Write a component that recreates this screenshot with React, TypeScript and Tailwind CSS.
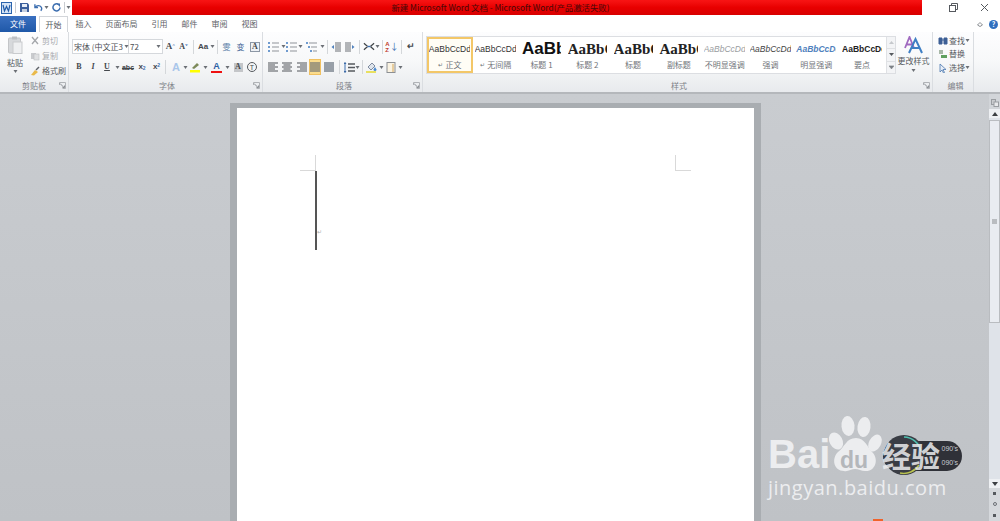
import React from "react";

const font = "font-['Noto_Sans_CJK_SC','Liberation_Sans',sans-serif]";

function Caret({ className = "w-[7px]" }: { className?: string }) {
  return (
    <span className={`flex shrink-0 justify-center ${className}`}>
      <svg width="5" height="3" viewBox="0 0 5 3"><path d="M0.5 0h4L2.5 3z" fill="#6b6f75" /></svg>
    </span>
  );
}
function Sep({ className = "mx-[3px]" }: { className?: string }) {
  return <span className={`h-[14px] w-px shrink-0 bg-[#d4d7da] ${className}`} />;
}
function Slot({ className = "w-[14px]", children }: { className?: string; children?: React.ReactNode }) {
  return <span className={`flex h-[16px] shrink-0 items-center justify-center ${className}`}>{children}</span>;
}
function Launcher() {
  return (
    <svg width="7" height="7" viewBox="0 0 7 7" className="shrink-0">
      <path d="M0.5 3V0.5H6.5V6.5H3.5" fill="none" stroke="#b0b3b7" strokeWidth="1" />
      <path d="M1 1.5L5 5.5M3.5 5.5H5.5V3.5" fill="none" stroke="#8a8e93" strokeWidth="1" />
    </svg>
  );
}
function Lines({ kind }: { kind: "bullet" | "num" | "multi" | "indentL" | "indentR" | "left" | "center" | "right" | "just" | "dist" }) {
  if (kind === "bullet" || kind === "num" || kind === "multi") {
    return (
      <svg width="11" height="10" viewBox="0 0 11 10">
        {[1, 5, 9].map((y, i) => (
          <g key={y}>
            <rect x={kind === "multi" ? i * 2 : 0} y={y - 1} width="2" height="2" fill="#6f9bcf" />
            <path d={`M${kind === "multi" ? 3 + i * 2 : 4} ${y}H11`} stroke="#8f9399" strokeWidth="1" />
          </g>
        ))}
      </svg>
    );
  }
  if (kind === "indentL" || kind === "indentR") {
    return (
      <svg width="10" height="10" viewBox="0 0 10 10">
        {[1, 3, 5, 7, 9].map((y) => (
          <path key={y} d={`M${kind === "indentL" ? 4 : 0} ${y}H${kind === "indentL" ? 10 : 6}`} stroke="#6a6e74" strokeWidth="1" />
        ))}
        <path d={kind === "indentL" ? "M3 3L0.5 5 3 7z" : "M7 3l2.500 2L7 7z"} fill="#4f81bd" />
      </svg>
    );
  }
  const ys = [1, 3, 5, 7, 9];
  return (
    <svg width="10" height="10" viewBox="0 0 10 10">
      {ys.map((y, i) => {
        const short = i % 2 === 1;
        let x1 = 0;
        let x2 = 10;
        if (short && kind === "left") x2 = 7;
        if (short && kind === "center") { x1 = 1.5; x2 = 8.5; }
        if (short && kind === "right") x1 = 3;
        return <path key={y} d={`M${x1} ${y}H${x2}`} stroke={kind === "dist" ? "#5a6672" : "#6a6e73"} strokeWidth="1.200" />;
      })}
    </svg>
  );
}

function Group({ className, label, launcher, children }: { className: string; label: string; launcher?: boolean; children: React.ReactNode }) {
  return (
    <div className={`flex h-full shrink-0 flex-col border-r border-[#dadde1] ${className}`}>
      <div className="min-h-0 flex-1">{children}</div>
      <div className="relative flex h-[14px] items-center justify-center pt-[2px] text-[8px] leading-none text-[#7d8187]">
        {label}
        {launcher && <span className="absolute right-[2px] top-[4px] flex"><Launcher /></span>}
      </div>
    </div>
  );
}

function StyleItem({ sample, label, sampleClass, selected, mark, boxClass = "w-[41px] justify-center" }: { sample: string; label: string; sampleClass: string; selected?: boolean; mark?: boolean; boxClass?: string }) {
  return (
    <div className={`flex h-[36px] w-[45.8px] shrink-0 flex-col items-center overflow-hidden ${selected ? "border-2 border-[#f3c768] bg-[#fffdf5]" : "border-2 border-transparent"}`}>
      <div className={`flex h-[20px] items-center overflow-hidden whitespace-nowrap ${boxClass}`}>
        <span className={sampleClass}>{sample}</span>
      </div>
      <div className="flex h-[12px] items-center whitespace-nowrap text-[8px] leading-none text-[#6f7378]">
        {mark && <span className="mr-[2px] text-[6px]">↵</span>}
        {label}
      </div>
    </div>
  );
}

function Tab({ label, className }: { label: string; className: string }) {
  return <div className={`flex h-[16px] shrink-0 items-center justify-center whitespace-nowrap text-[8px] leading-none text-[#5d6166] ${className}`}>{label}</div>;
}

const sampleFont = "font-['Liberation_Sans',sans-serif]";
const serif = "font-['Liberation_Serif',serif]";
const headBox = "w-[39px] justify-start";
const clipBox = "w-[40px] justify-start";

export default function App() {
  return (
    <div className={`relative flex h-[521px] w-[1000px] flex-col overflow-hidden bg-white ${font}`}>
      {/* title bar */}
      <div className="flex h-[16px] shrink-0 items-start bg-white">
        <div className="flex h-[15px] w-[72px] shrink-0 items-center pl-[1px]">
          <svg width="11" height="12" viewBox="0 0 11 12" className="shrink-0">
            <rect x="0.5" y="0.5" width="10" height="11" fill="#d6e4f5" stroke="#2b64ad" />
            <path d="M2 3l1.500 6L5.500 4.500 7.500 9 9 3" fill="none" stroke="#1f5aa8" strokeWidth="1.200" />
          </svg>
          <span className="mx-[3px] h-[11px] w-px bg-[#c9ccd0]" />
          <svg width="9" height="9" viewBox="0 0 9 9" className="ml-[1px] shrink-0">
            <path d="M0 0h7.500L9 1.500V9H0z" fill="#3c5f9c" />
            <rect x="2" y="1" width="5" height="3" fill="#e6edf7" />
            <rect x="2" y="6" width="5" height="3" fill="#c4cfdf" />
          </svg>
          <svg width="9" height="9" viewBox="0 0 10 9" className="ml-[5px] shrink-0">
            <path d="M1 1v3.500h3.500M1.500 4.200C3 2 6.500 1.800 8 4c.8 1.300.5 3-.5 4" fill="none" stroke="#3d6fb0" strokeWidth="1.500" />
          </svg>
          <Caret className="w-[7px]" />
          <svg width="9" height="9" viewBox="0 0 9 9" className="ml-[2px] shrink-0">
            <path d="M6.500 1.500A3.500 3.500 0 1 0 8 4.500" fill="none" stroke="#3d6fb0" strokeWidth="1.500" />
            <path d="M4.500 0.500h3.500V4z" fill="#3d6fb0" />
          </svg>
          <span className="ml-[3px] h-[11px] w-px bg-[#c9ccd0]" />
          <Caret className="w-[6px]" />
        </div>
        <div className="flex h-[15px] w-[850px] shrink-0 items-center justify-center whitespace-nowrap bg-gradient-to-b from-[#f81414] via-[#e80000] to-[#d80000] pl-[7px] text-[8.400px] leading-none text-[#480808]">
          新建 Microsoft Word 文档 - Microsoft Word(产品激活失败)
        </div>
        <div className="flex h-[15px] flex-1 items-center">
          <svg width="9" height="9" viewBox="0 0 9 9" className="ml-[27px] shrink-0">
            <rect x="0.500" y="2.500" width="6" height="6" fill="none" stroke="#55595e" />
            <path d="M2.500 2.500V0.500H8.500V6.500H6.500" fill="none" stroke="#55595e" />
          </svg>
          <svg width="9" height="9" viewBox="0 0 9 9" className="ml-[22px] shrink-0">
            <path d="M1 1L8 8M8 1L1 8" stroke="#55595e" strokeWidth="1" />
          </svg>
        </div>
      </div>

      {/* tabs */}
      <div className="flex h-[16px] shrink-0 items-center bg-white">
        <div className="flex h-[16px] w-[36px] shrink-0 items-center justify-center bg-gradient-to-b from-[#3a70c0] to-[#1f58a8] text-[8px] leading-none text-white">文件</div>
        <div className="ml-[3px] flex h-[16px] w-[29px] shrink-0 items-center justify-center border-x border-t border-[#d3d6da] bg-white text-[8px] leading-none text-[#55595e]">开始</div>
        <Tab label="插入" className="ml-[8px] w-[15px]" />
        <Tab label="页面布局" className="ml-[15px] w-[31px]" />
        <Tab label="引用" className="ml-[15px] w-[15px]" />
        <Tab label="邮件" className="ml-[15px] w-[15px]" />
        <Tab label="审阅" className="ml-[15px] w-[15px]" />
        <Tab label="视图" className="ml-[15px] w-[15px]" />
        <div className="ml-auto flex items-center pr-[1px]">
          <svg width="6" height="6" viewBox="0 0 6 6" className="mr-[6px]">
            <path d="M0.500 4L3 1.500 5.500 4 3 5.500z" fill="none" stroke="#8a8e93" />
          </svg>
          <span className="mr-[1px] flex h-[9px] w-[9px] items-center justify-center rounded-full bg-[#2f6fc0] text-[7px] font-bold leading-none text-white">?</span>
        </div>
      </div>

      {/* ribbon */}
      <div className="flex h-[62px] shrink-0 border-b-2 border-[#b4b7bb] bg-gradient-to-b from-[#fdfdfe] via-[#f7f8f9] to-[#e8eaed]">
        <Group className="w-[69px]" label="剪贴板" launcher>
          <div className="flex h-[46px]">
            <div className="flex w-[30px] shrink-0 flex-col items-center pt-[4px]">
              <svg width="15" height="18" viewBox="0 0 15 18">
                <rect x="0.500" y="2" width="12" height="15" rx="1" fill="#d7d9dc" stroke="#c3c5c8" />
                <rect x="4" y="0.500" width="5" height="3" fill="#bfc1c4" />
                <rect x="5" y="6" width="9" height="11.500" fill="#eeeff1" stroke="#c9cbce" />
              </svg>
              <span className="mt-[3px] text-[8px] leading-[12px] text-[#55595e]">粘贴</span>
              <Caret className="mt-[1px] w-[7px]" />
            </div>
            <div className="flex flex-col pt-[2px]">
              {[
                { t: "剪切", c: "text-[#a7aaae]", i: <path d="M2 1L8 8M8 1L2 8" stroke="#a4a7ab" strokeWidth="1.300" /> },
                { t: "复制", c: "text-[#a7aaae]", i: <><rect x="1" y="2" width="5" height="6" fill="#c9cbce" /><rect x="4" y="3" width="5" height="6" fill="#dfe0e2" stroke="#bcbec1" strokeWidth=".6" /></> },
                { t: "格式刷", c: "text-[#55595e]", i: <><path d="M1 9L5 4l3 2-4 3.500z" fill="#e9b949" /><path d="M6 4l3-3" stroke="#5f6368" strokeWidth="1.500" /></> },
              ].map((r) => (
                <div key={r.t} className="flex h-[15px] items-center whitespace-nowrap">
                  <svg width="10" height="10" viewBox="0 0 10 10" className="mr-[2px] shrink-0">{r.i}</svg>
                  <span className={`text-[8px] leading-none ${r.c}`}>{r.t}</span>
                </div>
              ))}
            </div>
          </div>
        </Group>

        <Group className="w-[194px] pl-[3px]" label="字体" launcher>
          <div className="flex h-[46px] flex-col pt-[7px]">
            <div className="flex h-[15px] items-center">
              <div className="flex h-[15px] w-[57px] shrink-0 items-center whitespace-nowrap border border-[#d5d8dc] bg-white pl-[1px] text-[8px] leading-none text-[#4a4e53]">
                宋体 (中文正3<Caret className="ml-[1px] w-[5px]" />
              </div>
              <div className="flex h-[15px] w-[34px] shrink-0 items-center justify-between border-y border-r border-[#d5d8dc] bg-white pl-[1px] text-[8px] leading-none text-[#4a4e53]">
                72<Caret className="w-[7px]" />
              </div>
              <Slot className="ml-[1px] w-[13px]"><span className={`text-[9px] font-bold leading-none text-[#44484d] ${serif}`}>A<sup className="text-[5px] text-[#3d6fb0]">^</sup></span></Slot>
              <Slot className="w-[13px]"><span className={`text-[8px] font-bold leading-none text-[#44484d] ${serif}`}>A<sup className="text-[5px] text-[#3d6fb0]">v</sup></span></Slot>
              <Sep className="mx-[3px]" />
              <Slot className="w-[12px]"><span className={`text-[8px] font-bold leading-none text-[#44484d] ${sampleFont}`}>Aa</span></Slot>
              <Caret className="w-[6px]" />
              <Sep className="mx-[2px]" />
              <Slot className="w-[13px]"><span className="text-[8px] leading-none text-[#5b7fa8]">雯</span></Slot>
              <Slot className="w-[15px]"><span className="text-[8px] leading-none text-[#3d5f95]">变</span></Slot>
              <Slot className="w-[14px]"><span className={`flex h-[10px] w-[10px] items-center justify-center border border-[#8c97a5] bg-[#eef1f5] text-[8px] font-bold leading-none text-[#44484d] ${serif}`}>A</span></Slot>
            </div>
            <div className="mt-[5px] flex h-[16px] items-center text-[8px] font-bold leading-none text-[#44484d]">
              <Slot><span className={serif}>B</span></Slot>
              <Slot><span className={`italic ${serif}`}>I</span></Slot>
              <Slot><span className={`underline ${serif}`}>U</span></Slot>
              <Caret />
              <Slot><span className={`text-[7px] line-through ${sampleFont}`}>abc</span></Slot>
              <Slot><span className={sampleFont}>x<sub className="text-[5px] text-[#3d6fb0]">2</sub></span></Slot>
              <Slot className="w-[15px]"><span className={sampleFont}>x<sup className="text-[5px] text-[#3d6fb0]">2</sup></span></Slot>
              <Sep className="ml-[1px] mr-[3px]" />
              <Slot><span className={`text-[11px] text-[#a9c6ea] ${sampleFont}`}>A</span></Slot>
              <Caret className="w-[5px]" />
              <Slot>
                <svg width="12" height="12" viewBox="0 0 12 12">
                  <path d="M3 7l5-5 2 2-5 4z" fill="#7d8a5a" />
                  <rect x="1" y="9" width="10" height="2.500" fill="#ffff00" />
                </svg>
              </Slot>
              <Caret />
              <Slot className="w-[15px]">
                <span className="flex flex-col items-center">
                  <span className={`text-[9px] leading-[9px] text-[#2d5fa5] ${sampleFont}`}>A</span>
                  <span className="h-[2px] w-[11px] bg-[#ee1111]" />
                </span>
              </Slot>
              <Caret />
              <Slot><span className={`flex h-[9px] w-[9px] items-center justify-center bg-[#c4c6c9] text-[8px] ${serif}`}>A</span></Slot>
              <Slot>
                <span className={`flex h-[10px] w-[10px] items-center justify-center rounded-full border border-[#55595e] text-[7px] font-normal leading-none ${sampleFont}`}>T</span>
              </Slot>
            </div>
          </div>
        </Group>

        <Group className="w-[160px] pl-[3px]" label="段落" launcher>
          <div className="flex h-[46px] flex-col pt-[7px]">
            <div className="flex h-[15px] items-center">
              <Slot><Lines kind="bullet" /></Slot>
              <Caret />
              <Slot className="ml-[-1px]"><Lines kind="num" /></Slot>
              <Caret />
              <Slot className="w-[15px]"><Lines kind="multi" /></Slot>
              <Caret />
              <Sep className="mx-[1px]" />
              <Slot><Lines kind="indentL" /></Slot>
              <Slot><Lines kind="indentR" /></Slot>
              <Sep className="mx-[2px]" />
              <Slot className="w-[13px]">
                <svg width="12" height="9" viewBox="0 0 13 9"><path d="M1 1l4 3.500M12 1L8 4.500M1 8l4-3.500M12 8L8 4.500" stroke="#3f4347" strokeWidth="1.300" /><path d="M5 4.500h3" stroke="#3d6fb0" strokeWidth="1.500" /></svg>
              </Slot>
              <Caret className="w-[5px]" />
              <Sep className="mx-[2px]" />
              <Slot className="w-[14px]"><span className={`text-[6px] font-bold leading-[6px] text-[#c0392b] ${sampleFont}`}>A<br />Z</span><span className="text-[9px] leading-none text-[#3d6fb0]">↓</span></Slot>
              <Sep className="mx-[2px]" />
              <Slot><span className={`text-[9px] font-bold leading-none text-[#44484d] ${sampleFont}`}>↵</span></Slot>
            </div>
            <div className="mt-[5px] flex h-[16px] items-center">
              <Slot><Lines kind="left" /></Slot>
              <Slot><Lines kind="center" /></Slot>
              <Slot className="w-[15px]"><Lines kind="right" /></Slot>
              <Slot className="h-[14px] border border-[#f0c060] bg-[#fbdc8c]"><span className="flex"><Lines kind="just" /></span></Slot>
              <Slot className="w-[15px]"><Lines kind="dist" /></Slot>
              <Sep className="mx-[3px]" />
              <Slot className="w-[12px]">
                <svg width="11" height="11" viewBox="0 0 11 11"><path d="M1 1v9M0 2l1-1.500L2 2M0 9l1 1.500L2 9" stroke="#3d6fb0" /><path d="M4 2h7M4 5.500h7M4 9h7" stroke="#55595e" strokeWidth="1.300" /></svg>
              </Slot>
              <Caret className="w-[5px]" />
              <Sep className="mx-[2px]" />
              <Slot className="w-[13px]">
                <svg width="13" height="12" viewBox="0 0 13 12"><path d="M3 6l4-4 3 3-4 4z" fill="#dfe5ec" stroke="#7f8ba0" /><path d="M10 6l1.500 2.500a1.500 1.500 0 1 1-3 0z" fill="#4c8bd0" /><rect x="1" y="10" width="10" height="2" fill="#e8e060" /></svg>
              </Slot>
              <Caret />
              <Slot className="w-[12px]">
                <svg width="10" height="11" viewBox="0 0 10 11"><rect x="1" y="0.500" width="8" height="10" fill="#faf3e2" stroke="#8c8f94" /><path d="M7 2v8" stroke="#d6a75a" /></svg>
              </Slot>
              <Caret />
            </div>
          </div>
        </Group>

        <Group className="w-[510px] pl-[3px]" label="样式" launcher>
          <div className="flex h-[46px]">
            <div className="mt-[4px] flex h-[38px] w-[470px] shrink-0 border border-[#dcdee2] bg-white">
              <div className="flex min-w-0 flex-1">
                <StyleItem sample="AaBbCcDd" label="正文" mark selected sampleClass={`text-[8.500px] text-[#333] ${sampleFont}`} />
                <StyleItem sample="AaBbCcDd" label="无间隔" mark sampleClass={`text-[8.500px] text-[#333] ${sampleFont}`} />
                <StyleItem sample="AaBbC" label="标题 1" boxClass={headBox} sampleClass={`text-[17px] font-bold text-[#111] ${sampleFont}`} />
                <StyleItem sample="AaBbC" label="标题 2" boxClass={headBox} sampleClass={`text-[15px] font-bold text-[#222] ${serif}`} />
                <StyleItem sample="AaBbC" label="标题" boxClass={headBox} sampleClass={`text-[15px] font-bold text-[#222] ${serif}`} />
                <StyleItem sample="AaBbC" label="副标题" boxClass={headBox} sampleClass={`text-[15px] font-bold text-[#222] ${serif}`} />
                <StyleItem sample="AaBbCcDd" label="不明显强调" sampleClass={`text-[8.500px] italic text-[#9a9da1] ${sampleFont}`} />
                <StyleItem sample="AaBbCcDd" label="强调" sampleClass={`text-[8.500px] italic text-[#444] ${sampleFont}`} />
                <StyleItem sample="AaBbCcDd" label="明显强调" boxClass={clipBox} sampleClass={`text-[8.500px] font-bold italic text-[#4f81bd] ${sampleFont}`} />
                <StyleItem sample="AaBbCcDd" label="要点" boxClass={clipBox} sampleClass={`text-[8.500px] font-bold text-[#222] ${sampleFont}`} />
              </div>
              <div className="flex w-[9px] shrink-0 flex-col border-l border-[#dfe1e4] bg-[#f3f4f6]">
                <div className="flex flex-1 items-center justify-center border-b border-[#dfe1e4]"><svg width="5" height="3" viewBox="0 0 5 3"><path d="M0 3h5L2.500 0z" fill="#c5c8cc" /></svg></div>
                <div className="flex flex-1 items-center justify-center border-b border-[#dfe1e4]"><svg width="5" height="3" viewBox="0 0 5 3"><path d="M0 0h5L2.500 3z" fill="#55595e" /></svg></div>
                <div className="flex flex-1 items-center justify-center"><svg width="5" height="4" viewBox="0 0 5 4"><path d="M0 0h5M0 1h5L2.500 4z" fill="#7c8086" stroke="#7c8086" strokeWidth=".4" /></svg></div>
              </div>
            </div>
            <div className="ml-[1px] flex w-[33px] shrink-0 flex-col items-center pt-[4px]">
              <svg width="19" height="18" viewBox="0 0 19 18">
                <path d="M1 12L5.500 1 10 12M2.500 8.500h6" fill="none" stroke="#a06ac0" strokeWidth="1.800" />
                <path d="M5 17L11.500 3 18 17M7.500 12h8" fill="none" stroke="#3f7fc4" strokeWidth="2" />
              </svg>
              <span className="mt-[2px] whitespace-nowrap text-[8px] leading-[10px] text-[#55595e]">更改样式</span>
              <Caret className="mt-[3px] w-[6px]" />
            </div>
          </div>
        </Group>

        <Group className="w-[41px] pl-[5px]" label="编辑">
          <div className="flex flex-col pt-[2px]">
            {[
              { t: "查找", caret: true, i: <path d="M1 2h3v6H1zM6 2h3v6H6zM4 4h2" fill="#3d5f95" stroke="#3d5f95" /> },
              { t: "替换", caret: false, i: <><rect x="1" y="1" width="4" height="4" fill="#a8b8a8" /><rect x="3" y="6" width="6" height="3" fill="#5fa05f" /></> },
              { t: "选择", caret: true, i: <path d="M2 1v8l2-2 1.500 3 1-.500L5 6.500h3z" fill="#e8eef7" stroke="#4c78b0" strokeWidth=".8" /> },
            ].map((r) => (
              <div key={r.t} className="flex h-[13.500px] items-center">
                <svg width="10" height="10" viewBox="0 0 10 10" className="mr-[1px] shrink-0">{r.i}</svg>
                <span className="whitespace-nowrap text-[8px] leading-none text-[#55595e]">{r.t}</span>
                {r.caret && <Caret className="w-[5px]" />}
              </div>
            ))}
          </div>
        </Group>
        <div className="flex-1" />
      </div>

      {/* document area */}
      <div className="flex min-h-0 flex-1 bg-gradient-to-b from-[#c9ccd0] to-[#bfc2c6]">
        <div className="flex min-w-0 flex-1 pt-[9px]">
          <div className="ml-[230px] w-[531px] shrink-0 border-x-[7px] border-t-[5px] border-[#a9adb1] bg-white">
            <div className="flex justify-between px-[63px] pt-[47px]">
              <div className="h-[16px] w-[16px] border-b border-r border-[#d9d9d9]" />
              <div className="h-[16px] w-[16px] border-b border-l border-[#d9d9d9]" />
            </div>
            <div className="relative ml-[78px] h-[79px] w-[2px] bg-[#555]">
              <span className="absolute left-[2px] top-[58px] text-[6px] leading-none text-[#b0b0b0]">↵</span>
            </div>
          </div>
        </div>
        {/* scrollbar */}
        <div className="flex w-[11px] shrink-0 flex-col items-center bg-[#dfe3e9]">
          <div className="flex h-[15px] w-full items-center justify-center bg-[#d2d5d9] pt-[2px]">
            <svg width="8" height="8" viewBox="0 0 8 8"><rect x="0.500" y="0.500" width="4" height="5" fill="#c9cbce" stroke="#9a9da1" /><rect x="3" y="3" width="4.500" height="4.500" fill="#e8e9eb" stroke="#9a9da1" /></svg>
          </div>
          <div className="flex h-[9px] w-full items-center justify-center bg-[#eef0f3]">
            <svg width="6" height="4" viewBox="0 0 6 4"><path d="M0 4h6L3 0z" fill="#3b3e42" /></svg>
          </div>
          <div className="mt-[2px] flex h-[203px] w-full items-center justify-center border border-[#b9bcc0] bg-[#e9ecf1]">
            <span className="h-[5px] w-[5px] bg-[#b9bcc0]" />
          </div>
          <div className="flex-1" />
          <div className="flex h-[9px] w-full items-center justify-center bg-[#eef0f3]">
            <svg width="6" height="4" viewBox="0 0 6 4"><path d="M0 0h6L3 4z" fill="#3b3e42" /></svg>
          </div>
          <div className="flex h-[33px] w-full flex-col items-center justify-around bg-[#d5d8dc]">
            <span className="h-[3px] w-[3px] bg-[#55595e]" />
            <span className="h-[4px] w-[4px] rounded-full border border-[#6b6f75]" />
            <span className="h-[3px] w-[3px] bg-[#55595e]" />
          </div>
        </div>
      </div>

      {/* watermark */}
      <div className="pointer-events-none absolute left-[766px] top-[414px] h-[107px] w-[200px]">
        <div className="absolute left-[117px] top-[27px] flex h-[30px] w-[79px] items-center justify-end rounded-full bg-[#2f3138] pr-[4px]">
          <span className={`text-[7px] leading-[14px] text-[#c9ccd0] ${sampleFont}`}>090's<br />090's</span>
        </div>
        <svg width="42" height="42" viewBox="0 0 42 42" className="absolute left-[117px] top-[20px]">
          <circle cx="21" cy="21" r="20" fill="#3a3d45" />
          <path d="M21 3A18 18 0 0 1 38 17" fill="none" stroke="#4fc0b0" strokeWidth="1.500" />
          <path d="M36 31A18 18 0 0 1 17 39" fill="none" stroke="#b9c24f" strokeWidth="1.500" />
        </svg>
        <svg width="58" height="60" viewBox="0 0 56 60" className="absolute left-[60px] top-0">
          <g fill="#ecedef">
            <ellipse cx="21" cy="12" rx="6.500" ry="10" transform="rotate(-6 21 12)" />
            <ellipse cx="37" cy="13" rx="6.500" ry="10" transform="rotate(8 37 13)" />
            <ellipse cx="9" cy="27" rx="6.500" ry="9" transform="rotate(-28 9 27)" />
            <ellipse cx="48" cy="29" rx="6" ry="9" transform="rotate(28 48 29)" />
            <path d="M29 24c9 0 11 9 17 15 6 7 2 19-8 18-4 0-6-2-10-2s-7 3-11 2C7 57 4 45 11 38c7-5 8-14 18-14z" />
          </g>
        </svg>
        <span className={`absolute left-[2px] top-[20px] text-[40px] font-bold leading-[40px] text-[#ecedef] ${sampleFont}`}>Bai</span>
        <span className={`absolute left-[74px] top-[34px] text-[23px] font-bold leading-[24px] text-[#b4b7bb] ${sampleFont}`}>du</span>
        <span className="absolute left-[116px] top-[24px] text-[29px] font-bold leading-[34px] text-[#ecedefdd]">经验</span>
        <span className="absolute left-[2px] top-[62px] text-[20px] leading-[24px] tracking-[0.500px] text-[#ecedef] font-['Open_Sans',sans-serif]">jingyan.baidu.com</span>
      </div>
      <div className="absolute bottom-0 left-[873px] h-[2px] w-[10px] bg-[#f0622a]" />
    </div>
  );
}
